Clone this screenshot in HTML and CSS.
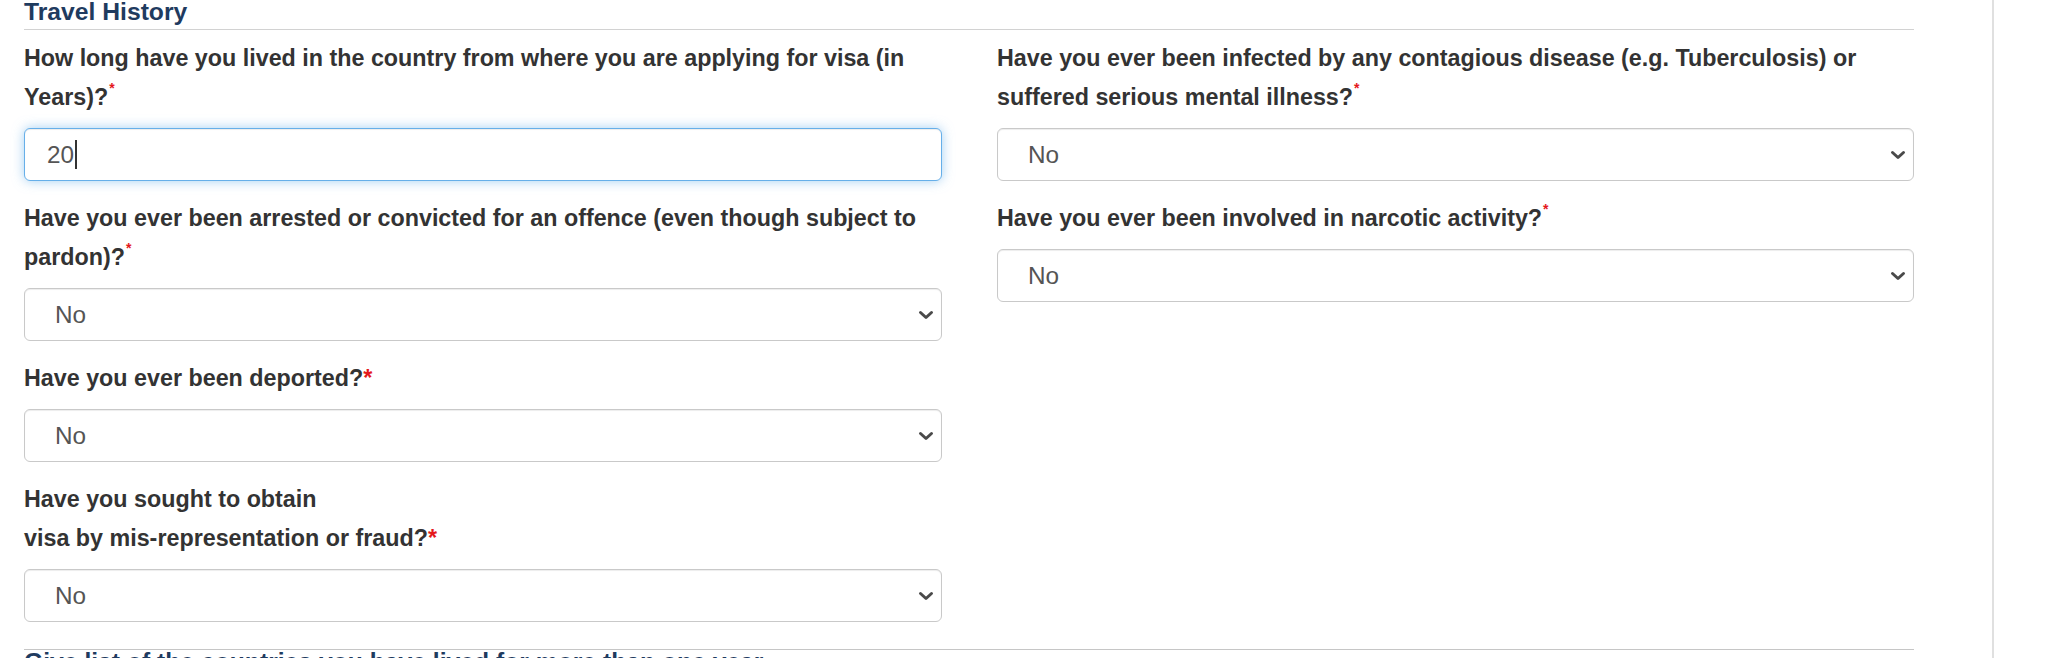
FILE: index.html
```html
<!DOCTYPE html>
<html lang="en">
<head>
<meta charset="utf-8">
<title>Travel History</title>
<link rel="stylesheet" href="styles.css">
</head>
<body>
<div class="page">
  <main class="main">
    <section class="section">
      <h3 class="section-title">Travel History</h3>
      <div class="form-grid">
        <div class="col">
          <div class="form-group">
            <label class="q">How long have you lived in the country from where you are applying for visa (in Years)?<sup class="req">*</sup></label>
            <div class="field input"><span class="value">20</span><span class="caret"></span></div>
          </div>
          <div class="form-group">
            <label class="q">Have you ever been arrested or convicted for an offence (even though subject to pardon)?<sup class="req">*</sup></label>
            <div class="select-wrap">
              <select class="field select"><option>No</option><option>Yes</option></select>
              <svg class="chev" viewBox="0 0 16 10" width="16" height="10"><path d="M2.5 2.5 L8 7.5 L13.5 2.5" fill="none" stroke="#4a4a4a" stroke-width="3" stroke-linecap="round" stroke-linejoin="round"/></svg>
            </div>
          </div>
          <div class="form-group">
            <label class="q">Have you ever been deported?<span class="req-lg">*</span></label>
            <div class="select-wrap">
              <select class="field select"><option>No</option><option>Yes</option></select>
              <svg class="chev" viewBox="0 0 16 10" width="16" height="10"><path d="M2.5 2.5 L8 7.5 L13.5 2.5" fill="none" stroke="#4a4a4a" stroke-width="3" stroke-linecap="round" stroke-linejoin="round"/></svg>
            </div>
          </div>
          <div class="form-group">
            <label class="q">Have you sought to obtain<br>visa by mis-representation or fraud?<span class="req-lg">*</span></label>
            <div class="select-wrap">
              <select class="field select"><option>No</option><option>Yes</option></select>
              <svg class="chev" viewBox="0 0 16 10" width="16" height="10"><path d="M2.5 2.5 L8 7.5 L13.5 2.5" fill="none" stroke="#4a4a4a" stroke-width="3" stroke-linecap="round" stroke-linejoin="round"/></svg>
            </div>
          </div>
        </div>
        <div class="col">
          <div class="form-group">
            <label class="q">Have you ever been infected by any contagious disease (e.g. Tuberculosis) or suffered serious mental illness?<sup class="req">*</sup></label>
            <div class="select-wrap">
              <select class="field select"><option>No</option><option>Yes</option></select>
              <svg class="chev" viewBox="0 0 16 10" width="16" height="10"><path d="M2.5 2.5 L8 7.5 L13.5 2.5" fill="none" stroke="#4a4a4a" stroke-width="3" stroke-linecap="round" stroke-linejoin="round"/></svg>
            </div>
          </div>
          <div class="form-group">
            <label class="q">Have you ever been involved in narcotic activity?<sup class="req">*</sup></label>
            <div class="select-wrap">
              <select class="field select"><option>No</option><option>Yes</option></select>
              <svg class="chev" viewBox="0 0 16 10" width="16" height="10"><path d="M2.5 2.5 L8 7.5 L13.5 2.5" fill="none" stroke="#4a4a4a" stroke-width="3" stroke-linecap="round" stroke-linejoin="round"/></svg>
            </div>
          </div>
        </div>
      </div>
    </section>
    <section class="section next">
      <h3 class="section-title2">Give list of the countries you have lived for more than one year</h3>
    </section>
  </main>
  <aside class="scroll-rail"></aside>
</div>
</body>
</html>
```

FILE: styles.css
```css
* { box-sizing: border-box; }
html, body { margin: 0; padding: 0; background: #fff; }
body {
  font-family: "Liberation Sans", Arial, Helvetica, sans-serif;
  color: #333;
  overflow: hidden;
  height: 658px;
}
.page { display: flex; width: 2048px; height: 658px; }
.main { width: 1992px; padding-left: 24px; }
.scroll-rail { width: 56px; border-left: 2px solid #e0e0e0; background: #fff; }

.section-title {
  margin: -2px 0 0;
  width: 1890px;
  font-size: 24.7px;
  line-height: 27px;
  font-weight: bold;
  color: #1f3b5f;
  padding-bottom: 4px;
  border-bottom: 1px solid #d2d2d2;
}

.form-grid {
  display: grid;
  grid-template-columns: 918px 917px;
  column-gap: 55px;
  margin-top: 9px;
  align-items: start;
}
.form-group { margin-bottom: 18px; }
.q {
  display: block;
  font-size: 23.3px;
  line-height: 39px;
  font-weight: bold;
  color: #333;
  margin-bottom: 11px;
}
.req {
  color: #e4181b;
  font-size: 14px;
  line-height: 0;
  vertical-align: 12px;
  margin-left: 1px;
}
.req-lg { color: #e4181b; }

.field {
  display: block;
  width: 100%;
  height: 53px;
  border: 1px solid #c9c9c9;
  border-radius: 6px;
  background: #fff;
  font-family: "Liberation Sans", Arial, Helvetica, sans-serif;
  font-size: 24.3px;
  color: #555;
  box-shadow: inset 0 1px 1px rgba(0, 0, 0, 0.075);
}
.input {
  display: flex;
  align-items: center;
  padding-left: 22px;
  border-color: #66afe9;
  box-shadow: inset 0 1px 1px rgba(0, 0, 0, 0.075), 0 0 12px rgba(102, 175, 233, 0.6);
}
.caret {
  display: inline-block;
  width: 1.5px;
  height: 29px;
  background: #333;
  margin-left: 1px;
}
.select-wrap { position: relative; }
.select {
  appearance: none;
  -webkit-appearance: none;
  padding: 0 40px 0 30px;
  outline: none;
}
.chev {
  position: absolute;
  right: 8px;
  top: 50%;
  margin-top: -5px;
  pointer-events: none;
}

.next {
  width: 1890px;
  margin-top: 9px;
  border-top: 1px solid #c6c6c6;
}
.section-title2 {
  margin: 0;
  font-size: 24.7px;
  line-height: 24px;
  font-weight: bold;
  color: #1f3b5f;
  white-space: nowrap;
}
```
